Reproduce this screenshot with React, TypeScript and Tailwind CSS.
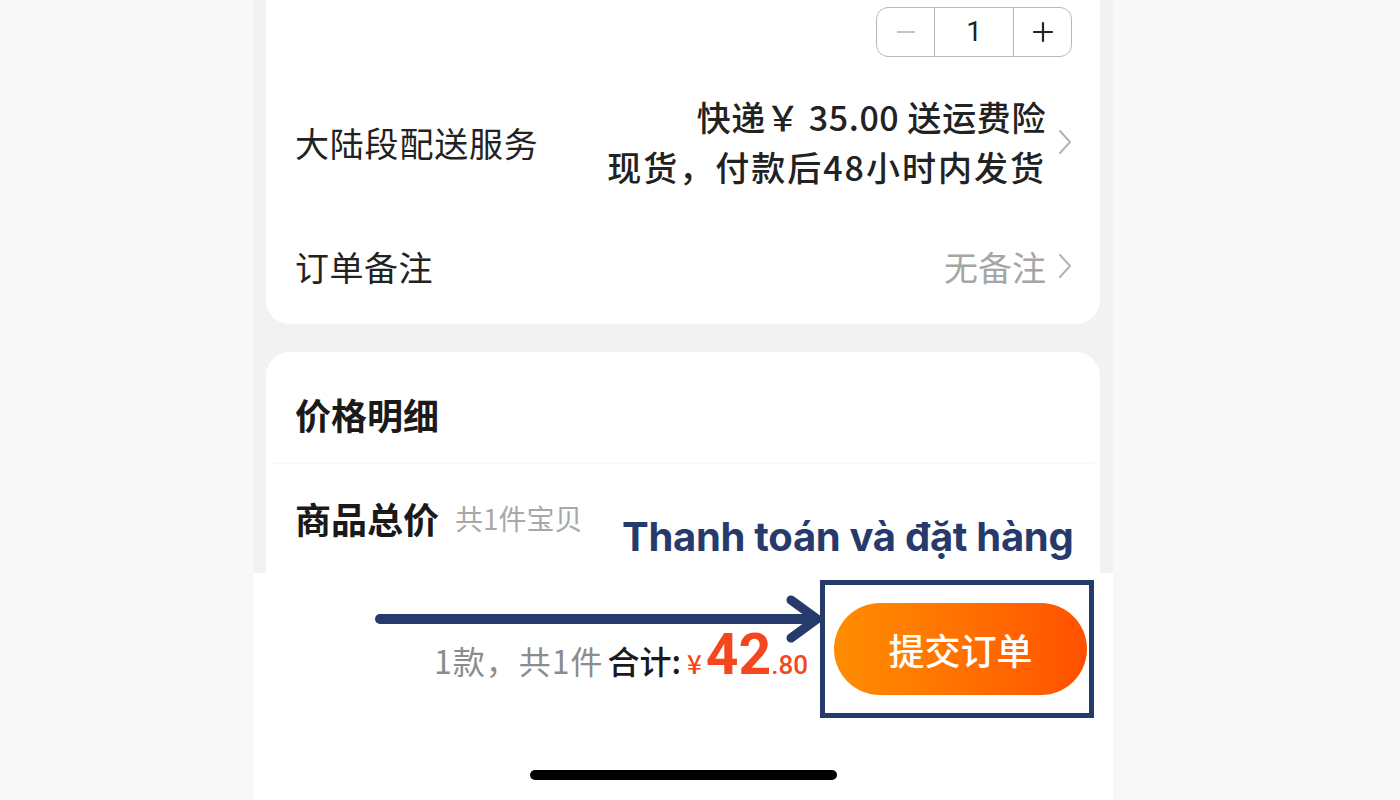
import React from 'react';

const cjk = { fontFamily: '"Noto Sans CJK SC", "Noto Sans", sans-serif' };
const num = { fontFamily: 'Roboto, "Noto Sans CJK SC", sans-serif' };

function Chevron({ className }: { className?: string }) {
  return (
    <svg width="14" height="26" viewBox="0 0 14 26" className={className}>
      <polyline
        points="2,2 12,13 2,24"
        fill="none"
        stroke="#b3b3b3"
        strokeWidth="2"
        strokeLinecap="round"
        strokeLinejoin="round"
      />
    </svg>
  );
}

function Stepper() {
  return (
    <div className="flex h-[50px] w-[196px] rounded-[12px] border-[1.5px] border-[#b8b8b8] text-[#222]">
      <div className="flex w-[57px] items-center justify-center">
        <div className="h-[2px] w-[18px] bg-[#c4c4c4]" />
      </div>
      <div className="flex flex-1 items-center justify-center border-x-[1.5px] border-[#b8b8b8] text-[28px]" style={num}>
        1
      </div>
      <div className="flex w-[57px] items-center justify-center">
        <svg width="22" height="22" viewBox="0 0 22 22">
          <path d="M11 2v18M2 11h18" stroke="#222" strokeWidth="2.2" strokeLinecap="round" />
        </svg>
      </div>
    </div>
  );
}

function OrderSummary() {
  return (
    <div className="flex flex-col rounded-b-[24px] bg-white pl-[29px] pr-[28px] pb-[28px]">
      <div className="flex h-[57px] justify-end pt-[7px]">
        <Stepper />
      </div>

      <div className="mt-[35px] flex items-center justify-between">
        <span className="text-[34px] tracking-[0.8px] text-[#222]">大陆段配送服务</span>
        <div className="flex items-center gap-[12px]">
          <div className="flex flex-col items-end text-[34px] font-medium leading-[50px] text-[#222]">
            <span className="tracking-[0.6px]">快递￥ 35.00 送运费险</span>
            <span className="tracking-[2px]">现货，付款后48小时内发货</span>
          </div>
          <Chevron />
        </div>
      </div>

      <div className="mt-[44px] flex h-[60px] items-center justify-between">
        <span className="text-[34px] tracking-[0.5px] text-[#222]">订单备注</span>
        <div className="flex items-center gap-[12px]">
          <span className="text-[34px] text-[#a6a6a6]">无备注</span>
          <Chevron />
        </div>
      </div>
    </div>
  );
}

function PriceDetail() {
  return (
    <div className="flex flex-1 flex-col overflow-hidden rounded-t-[24px] bg-white pt-[37px]">
      <span className="px-[29px] text-[36px] font-bold leading-[50px] text-[#1a1a1a]">价格明细</span>
      <div className="mx-[6px] mt-[24px] h-px bg-[#f8f8f8]" />
      <div className="mt-[29px] flex items-center gap-[16px] px-[29px] leading-[50px]">
        <span className="text-[36px] font-bold text-[#1a1a1a]">商品总价</span>
        <span className="text-[28px] text-[#a8a8a8]">共1件宝贝</span>
      </div>
    </div>
  );
}

function BottomBar() {
  return (
    <div className="flex h-[227px] flex-col bg-white">
      <div className="flex items-center justify-end pt-[7px] pr-[19px]">
        <div className="mr-[12px] mt-[12px] flex items-baseline">
          <span className="text-[32px] tracking-[1px] text-[#8c8c8c]">1款，共1件</span>
          <span className="ml-[4px] text-[32px] font-medium text-[#1a1a1a]">合计:</span>
          <span className="ml-[6px] text-[26px] font-medium text-[#f4471d]">¥</span>
          <span className="ml-[4px] text-[57px] font-bold leading-none text-[#f4471d]" style={num}>
            42
          </span>
          <span className="text-[26px] font-medium text-[#f4471d]" style={num}>
            .80
          </span>
        </div>
        <div className="flex h-[138px] w-[274px] items-center border-[5px] border-[#273a6c] pl-[9px] pr-[2px]">
          <button
            type="button"
            className="flex h-[92px] w-[253px] items-center justify-center rounded-full bg-gradient-to-r from-[#ff8d00] to-[#ff5000] text-[36px] font-medium text-white"
          >
            提交订单
          </button>
        </div>
      </div>
      <div className="mx-auto mt-[52px] h-[10px] w-[307px] rounded-full bg-black" />
    </div>
  );
}

export default function App() {
  return (
    <div className="flex h-[800px] w-full overflow-hidden bg-[#f8f8f8]" style={cjk}>
      <div className="relative ml-[253px] flex h-full w-[860px] flex-col bg-[#f2f2f2]">
        <div className="mx-[13px]">
          <OrderSummary />
        </div>
        <div className="mx-[13px] mt-[28px] flex flex-1 flex-col">
          <PriceDetail />
        </div>
        <BottomBar />

        {/* annotation overlay */}
        <div
          className="absolute left-[350px] top-[505px] h-[70px] w-[497px] bg-white pl-[19px] text-[40px] font-bold leading-[64px] tracking-[-0.3px] text-[#273a6c]"
          style={{ fontFamily: 'Inter, Roboto, sans-serif' }}
        >
          Thanh toán và đặt hàng
        </div>
        <svg className="absolute left-[119px] top-[593px]" width="456" height="52" viewBox="0 0 456 52">
          <line x1="8" y1="26" x2="440" y2="26" stroke="#273a6c" strokeWidth="10" strokeLinecap="round" />
          <polyline
            points="419,7 445,26 419,45"
            fill="none"
            stroke="#273a6c"
            strokeWidth="9"
            strokeLinecap="round"
            strokeLinejoin="round"
          />
        </svg>
      </div>
    </div>
  );
}
